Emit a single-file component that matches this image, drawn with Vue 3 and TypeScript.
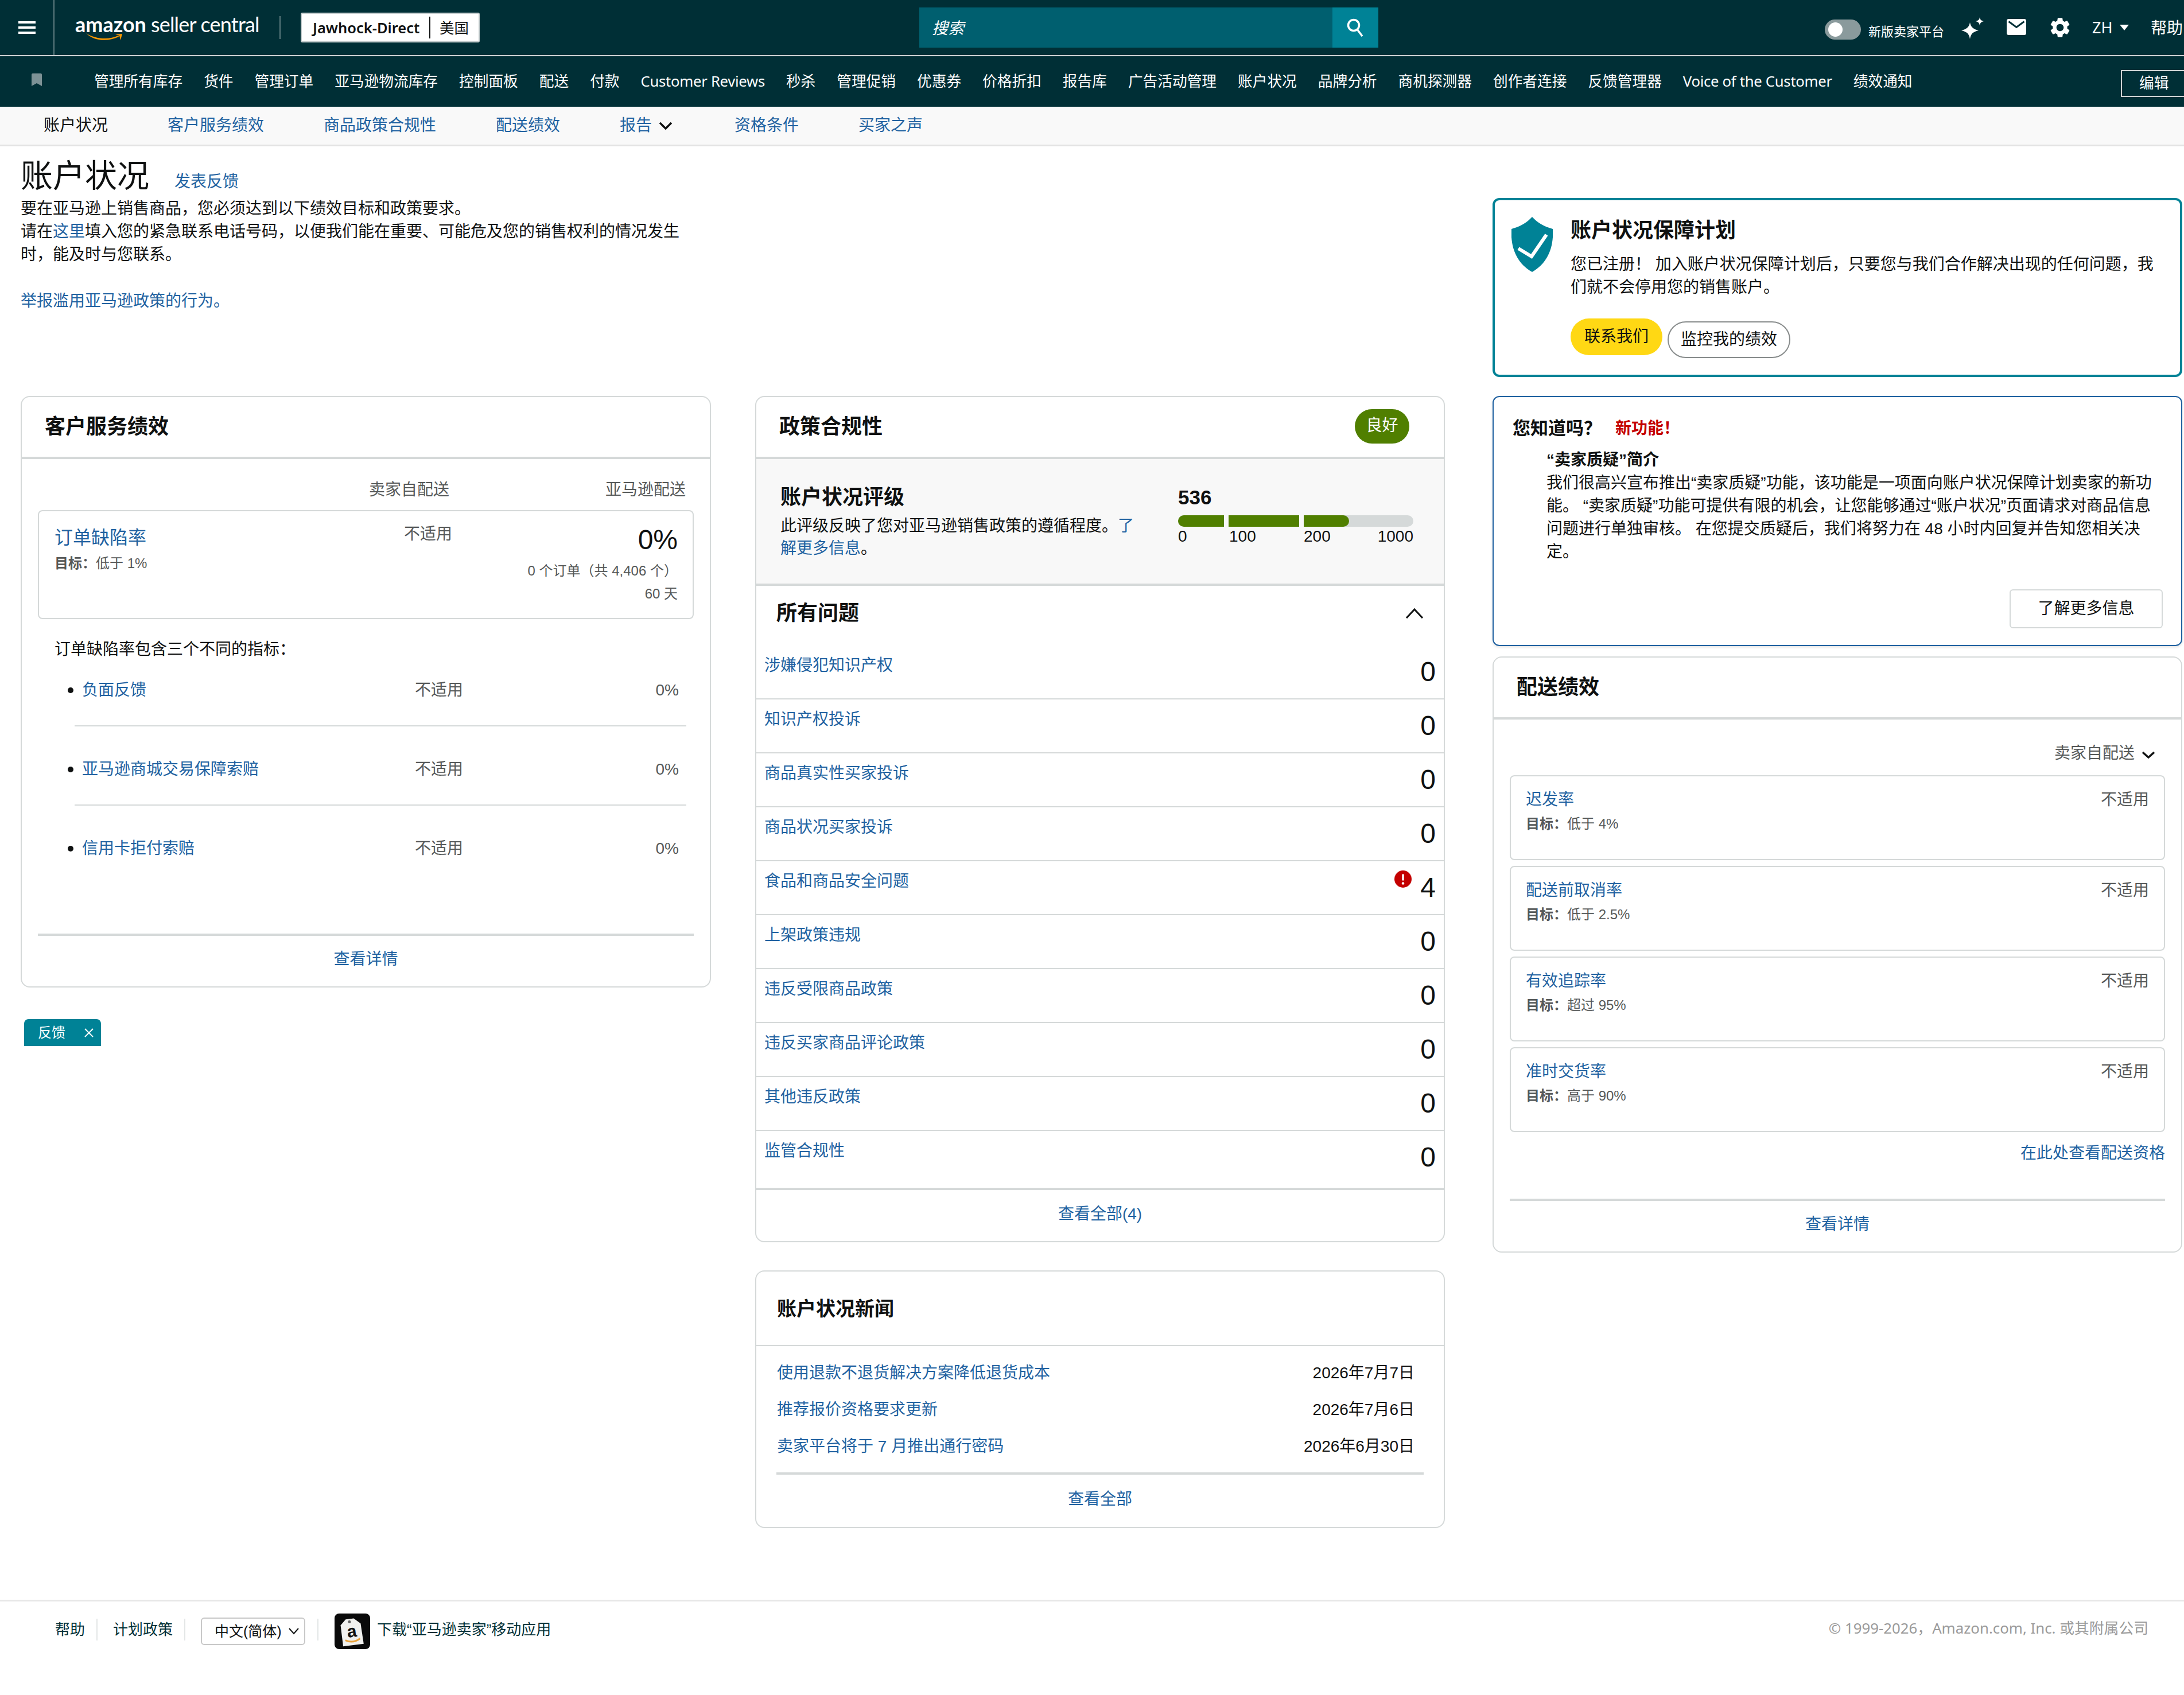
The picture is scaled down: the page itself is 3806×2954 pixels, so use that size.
<script setup lang="ts">
const navItems = [
  '管理所有库存', '货件', '管理订单', '亚马逊物流库存', '控制面板', '配送', '付款', 'Customer Reviews',
  '秒杀', '管理促销', '优惠券', '价格折扣', '报告库', '广告活动管理', '账户状况', '品牌分析', '商机探测器',
  '创作者连接', '反馈管理器', 'Voice of the Customer', '绩效通知',
]
const tabs = ['客户服务绩效', '商品政策合规性', '配送绩效']
const defects = ['负面反馈', '亚马逊商城交易保障索赔', '信用卡拒付索赔']
const issues = [
  { name: '涉嫌侵犯知识产权', count: 0 },
  { name: '知识产权投诉', count: 0 },
  { name: '商品真实性买家投诉', count: 0 },
  { name: '商品状况买家投诉', count: 0 },
  { name: '食品和商品安全问题', count: 4 },
  { name: '上架政策违规', count: 0 },
  { name: '违反受限商品政策', count: 0 },
  { name: '违反买家商品评论政策', count: 0 },
  { name: '其他违反政策', count: 0 },
  { name: '监管合规性', count: 0 },
]
const segments = [80, 123, 79]
const news = [
  { title: '使用退款不退货解决方案降低退货成本', date: '2026年7月7日' },
  { title: '推荐报价资格要求更新', date: '2026年7月6日' },
  { title: '卖家平台将于 7 月推出通行密码', date: '2026年6月30日' },
]
const shipping = [
  { name: '迟发率', goal: '低于 4%' },
  { name: '配送前取消率', goal: '低于 2.5%' },
  { name: '有效追踪率', goal: '超过 95%' },
  { name: '准时交货率', goal: '高于 90%' },
]
const isLatin = (s: string) => /[a-z]/i.test(s)
</script>

<template>
  <div class="app">
    <header class="topbar">
      <div class="menu">
        <svg width="30" height="22" viewBox="0 0 30 22"><path d="M0 2h30M0 11h30M0 20h30" stroke="#fff" stroke-width="4" /></svg>
      </div>
      <div class="logo">
        <span class="logo-a">amazon</span><span class="logo-b">seller central</span>
        <svg class="smile" width="64" height="14" viewBox="0 0 64 14"><path d="M0 0C14 9 38 13 56 4l1 2C38 15 14 14 0 0z" fill="#f90" /><path d="M51 2l12-1-3 11-2-8z" fill="#f90" /></svg>
      </div>
      <div class="logo-sep"></div>
      <div class="account"><span class="acc-name">Jawhock-Direct</span><span class="acc-region">美国</span></div>
      <div class="search">
        <div class="search-input">搜索</div>
        <div class="search-btn">
          <svg width="30" height="32" viewBox="0 0 30 32"><circle cx="12" cy="12" r="9.500" fill="none" stroke="#fff" stroke-width="3.500" /><path d="M18 19l9 12" stroke="#fff" stroke-width="3.500" /></svg>
        </div>
      </div>
      <div class="tools">
        <div class="toggle"><span class="knob"></span></div>
        <span class="toggle-label">新版卖家平台</span>
        <svg class="sparkle" width="40" height="39" viewBox="0 0 40 39"><path d="M15 10c1.500 8 5 11.500 15 14-10 2.500-13.500 6-15 15-1.500-9-5-12.500-15-15 10-2.500 13.500-6 15-14z" fill="#fff" /><path d="M32 1c.6 4 2.500 6 7 7-4.500 1-6.400 3-7 7.500-.6-4.500-2.500-6.500-7-7.500 4.500-1 6.400-3 7-7z" fill="#fff" /></svg>
        <svg class="mail" width="34" height="28" viewBox="0 0 34 28"><rect width="34" height="28" rx="3.500" fill="#fff" /><path d="M3.500 4.500L17 14.500 30.500 4.500" fill="none" stroke="#002f36" stroke-width="3" /></svg>
        <svg class="gear" width="42" height="42" viewBox="0 0 24 24"><path fill="#fff" d="M19.14 12.94c.04-.3.06-.61.06-.94 0-.32-.02-.64-.07-.94l2.03-1.58a.49.49 0 0 0 .12-.61l-1.92-3.32a.488.488 0 0 0-.59-.22l-2.39.96c-.5-.38-1.03-.7-1.62-.94l-.36-2.54a.484.484 0 0 0-.48-.41h-3.84c-.24 0-.43.17-.47.41l-.36 2.54c-.59.24-1.13.57-1.62.94l-2.39-.96c-.22-.08-.47 0-.59.22L2.74 8.87c-.12.21-.08.47.12.61l2.03 1.58c-.05.3-.09.63-.09.94s.02.64.07.94l-2.03 1.58a.49.49 0 0 0-.12.61l1.92 3.32c.12.22.37.29.59.22l2.39-.96c.5.38 1.03.7 1.62.94l.36 2.54c.05.24.24.41.48.41h3.84c.24 0 .44-.17.47-.41l.36-2.54c.59-.24 1.13-.56 1.62-.94l2.39.96c.22.08.47 0 .59-.22l1.92-3.32c.12-.22.07-.47-.12-.61l-2.01-1.58zM12 15.6c-1.98 0-3.6-1.62-3.6-3.6s1.62-3.6 3.6-3.6 3.6 1.62 3.6 3.6-1.62 3.6-3.6 3.6z" /></svg>
        <span class="lang">ZH</span>
        <span class="caret"></span>
        <span class="help">帮助</span>
      </div>
    </header>

    <nav class="navbar">
      <svg class="bookmark" width="18" height="22" viewBox="0 0 18 22"><path d="M0 2a2 2 0 0 1 2-2h14a2 2 0 0 1 2 2v20l-9-5-9 5z" fill="#7d9296" /></svg>
      <span v-for="item in navItems" :key="item" class="nav-item" :class="{ latin: isLatin(item) }">{{ item }}</span>
      <button class="edit">编辑</button>
    </nav>

    <div class="tabs">
      <span class="tab-current">账户状况</span>
      <a v-for="t in tabs" :key="t" class="link">{{ t }}</a>
      <a class="link report">报告
        <svg width="24" height="14" viewBox="0 0 24 14"><path d="M2 2l10 10L22 2" fill="none" stroke="#0f1111" stroke-width="3.500" /></svg>
      </a>
      <a class="link">资格条件</a>
      <a class="link">买家之声</a>
    </div>

    <main class="main">
      <section class="intro">
        <div class="title-row">
          <h1>账户状况</h1>
          <a class="link">发表反馈</a>
        </div>
        <p>要在亚马逊上销售商品，您必须达到以下绩效目标和政策要求。</p>
        <p>请在<a class="link">这里</a>填入您的紧急联系电话号码，以便我们能在重要、可能危及您的销售权利的情况发生时，能及时与您联系。</p>
        <p class="report-link"><a class="link">举报滥用亚马逊政策的行为。</a></p>
      </section>

      <section class="protect">
        <svg class="shield" width="72" height="96" viewBox="0 0 72 96">
          <path d="M36 0c9 10 21 17 36 21 2 32-9 60-36 75C9 81-2 53 0 21 15 17 27 10 36 0z" fill="#008296" />
          <path d="M12 55l23 14 26-38" fill="none" stroke="#fff" stroke-width="6" />
        </svg>
        <div class="protect-body">
          <h2>账户状况保障计划</h2>
          <p>您已注册！ 加入账户状况保障计划后，只要您与我们合作解决出现的任何问题，我们就不会停用您的销售账户。</p>
          <div class="protect-btns">
            <button class="btn-yellow">联系我们</button>
            <button class="btn-outline">监控我的绩效</button>
          </div>
        </div>
      </section>

      <div class="col col-left">
        <section class="card">
          <div class="card-head"><h2>客户服务绩效</h2></div>
          <div class="cs-body">
            <div class="cs-cols"><span>卖家自配送</span><span>亚马逊配送</span></div>
            <div class="odr">
              <div>
                <a class="link odr-name">订单缺陷率</a>
                <div class="goal"><b>目标：</b>低于 1%</div>
              </div>
              <div class="odr-na">不适用</div>
              <div class="odr-val">
                <div class="odr-pct">0%</div>
                <div class="odr-sub">0 个订单（共 4,406 个）</div>
                <div class="odr-sub">60 天</div>
              </div>
            </div>
            <p class="cs-note">订单缺陷率包含三个不同的指标：</p>
            <div class="defects">
              <div v-for="d in defects" :key="d" class="defect">
                <span class="bullet"></span>
                <a class="link defect-name">{{ d }}</a>
                <span class="muted defect-na">不适用</span>
                <span class="muted defect-val">0%</span>
              </div>
            </div>
            <div class="card-foot cs-foot"><a class="link">查看详情</a></div>
          </div>
        </section>
        <div class="feedback">
          <span>反馈</span>
          <svg width="18" height="18" viewBox="0 0 18 18"><path d="M2 2l14 14M16 2L2 16" stroke="#fff" stroke-width="2" /></svg>
        </div>
      </div>

      <div class="col col-mid">
        <section class="card">
          <div class="card-head head-badge">
            <h2>政策合规性</h2>
            <span class="badge">良好</span>
          </div>
          <div class="rating">
            <div class="rating-text">
              <h3>账户状况评级</h3>
              <p>此评级反映了您对亚马逊销售政策的遵循程度。<a class="link">了解更多信息</a>。</p>
            </div>
            <div class="rating-score">
              <div class="score">536</div>
              <div class="bar">
                <span v-for="(s, i) in segments" :key="i" class="seg" :style="{ width: s + 'px' }"></span>
              </div>
              <div class="ticks"><span class="t0">0</span><span class="t1">100</span><span class="t2">200</span><span>1000</span></div>
            </div>
          </div>
          <div class="issues-head">
            <h3>所有问题</h3>
            <svg width="32" height="20" viewBox="0 0 32 20"><path d="M2 18L16 3l14 15" fill="none" stroke="#0f1111" stroke-width="3" /></svg>
          </div>
          <div v-for="row in issues" :key="row.name" class="issue">
            <a class="link">{{ row.name }}</a>
            <svg v-if="row.count" class="alert" width="30" height="30" viewBox="0 0 30 30"><circle cx="15" cy="15" r="15" fill="#c40000" /><path d="M15 6.500v11" stroke="#fff" stroke-width="3.500" /><circle cx="15" cy="22.500" r="2.200" fill="#fff" /></svg>
            <span class="count">{{ row.count }}</span>
          </div>
          <div class="see-all"><a class="link">查看全部(4)</a></div>
        </section>

        <section class="card news">
          <h3 class="news-title">账户状况新闻</h3>
          <div class="news-list">
            <div v-for="n in news" :key="n.title" class="news-row">
              <a class="link">{{ n.title }}</a>
              <span>{{ n.date }}</span>
            </div>
          </div>
          <div class="card-foot news-foot"><a class="link">查看全部</a></div>
        </section>
      </div>

      <div class="col col-right">
        <section class="tip">
          <div class="tip-head"><strong>您知道吗？</strong><span class="tip-new">新功能！</span></div>
          <div class="tip-body">
            <b>“卖家质疑”简介</b>
            <p>我们很高兴宣布推出“卖家质疑”功能，该功能是一项面向账户状况保障计划卖家的新功能。 “卖家质疑”功能可提供有限的机会，让您能够通过“账户状况”页面请求对商品信息问题进行单独审核。 在您提交质疑后，我们将努力在 48 小时内回复并告知您相关决定。</p>
          </div>
          <div class="tip-actions"><button class="btn-square">了解更多信息</button></div>
        </section>

        <section class="card ship">
          <div class="card-head"><h2>配送绩效</h2></div>
          <div class="ship-body">
            <div class="ship-filter">
              <span>卖家自配送</span>
              <svg width="24" height="14" viewBox="0 0 24 14"><path d="M2 2l10 9 10-9" fill="none" stroke="#0f1111" stroke-width="3.500" /></svg>
            </div>
            <div class="ship-list">
              <div v-for="s in shipping" :key="s.name" class="ship-box">
                <div>
                  <a class="link">{{ s.name }}</a>
                  <div class="goal ship-goal"><b>目标：</b>{{ s.goal }}</div>
                </div>
                <span class="muted">不适用</span>
              </div>
            </div>
            <div class="ship-more"><a class="link">在此处查看配送资格</a></div>
            <div class="card-foot ship-foot"><a class="link">查看详情</a></div>
          </div>
        </section>
      </div>
    </main>

    <footer class="footer">
      <a>帮助</a>
      <span class="foot-sep"></span>
      <a>计划政策</a>
      <span class="foot-sep"></span>
      <div class="select">
        <span>中文(简体)</span>
        <svg width="18" height="12" viewBox="0 0 18 12"><path d="M1 1l8 9 8-9" fill="none" stroke="#0f1111" stroke-width="2" /></svg>
      </div>
      <span class="foot-sep"></span>
      <svg class="app-icon" width="62" height="62" viewBox="0 0 62 62">
        <rect width="62" height="62" rx="8" fill="#0a0a0a" />
        <g transform="rotate(-7 31 31)">
          <path d="M12 18l10-9h14l11 10 1 36H12z" fill="#f1f1ef" />
          <circle cx="28" cy="14" r="2.500" fill="#666" />
          <text x="30" y="41" text-anchor="middle" class="tag-a">a</text>
          <path d="M17 45c8 5 17 5 26 0" fill="none" stroke="#e9a23b" stroke-width="3" />
        </g>
      </svg>
      <a class="app-text">下载“亚马逊卖家”移动应用</a>
      <span class="copyright">© 1999-2026，Amazon.com, Inc. 或其附属公司</span>
    </footer>
  </div>
</template>

<style>
html, body { margin: 0; background: #fff; }
</style>

<style scoped>
.app {
  width: 3806px;
  height: 2954px;
  overflow: hidden;
  font: 28px/40px "Liberation Sans", "Noto Sans CJK SC", sans-serif;
  color: #0f1111;
  background: #fff;
}
h1, h2, h3, p { margin: 0; }
button { font: inherit; padding: 0; cursor: pointer; }
.link { color: #2162a1; text-decoration: none; }
.muted { color: #565959; white-space: nowrap; }

/* top bar */
.topbar {
  height: 96px;
  display: flex;
  align-items: center;
  background: #002f36;
  border-bottom: 2px solid #cdd3d4;
  color: #fff;
  font-family: "Noto Sans", "Noto Sans CJK SC", sans-serif;
}
.menu {
  width: 95px;
  height: 96px;
  padding-left: 32px;
  box-sizing: border-box;
  border-right: 2px solid #5c7a7e;
  display: flex;
  align-items: center;
}
.logo { margin-left: 36px; display: flex; align-items: baseline; gap: 8px; position: relative; margin-top: -12px; width: 320px; white-space: nowrap; }
.logo-a { font: 700 36px/44px Lato, sans-serif; }
.logo-b { font: 400 36px/44px Lato, sans-serif; letter-spacing: -0.8px; }
.smile { position: absolute; left: 19px; top: 38px; }
.logo-sep { width: 2px; height: 40px; background: #5c7a7e; margin-left: 36px; }
.account {
  margin-left: 35px;
  width: 312px;
  height: 52px;
  box-sizing: border-box;
  background: #fff;
  border: 2px solid #c5cdce;
  border-bottom-width: 3px;
  border-radius: 3px;
  display: flex;
  align-items: center;
  color: #0f1111;
  padding-left: 19px;
  font-size: 25.500px;
}
.acc-name { font-weight: 600; width: 203px; border-right: 2px solid #0f1111; line-height: 38px; white-space: nowrap; }
.acc-region { margin-left: 16px; }
.search { margin-left: 766px; width: 800px; height: 70px; display: flex; }
.search-input {
  flex: 1;
  background: #005f6f;
  color: #fff;
  padding-left: 22px;
  line-height: 70px;
  font-style: italic;
}
.search-btn { width: 80px; background: #008296; display: flex; align-items: center; justify-content: center; }
.tools { margin-left: auto; display: flex; align-items: center; height: 96px; }
.toggle { width: 63px; height: 35px; border-radius: 18px; background: #8a9a9c; margin-top: 6px; padding: 5px 0 0 6px; box-sizing: border-box; }
.knob { display: block; width: 25px; height: 25px; border-radius: 50%; background: #fff; }
.toggle-label { margin-left: 13px; font-size: 22px; margin-top: 12px; width: 133px; }
.sparkle { margin-left: 29px; }
.mail { margin-left: 39px; margin-top: -2px; }
.gear { margin-left: 38px; margin-top: -1px; }
.lang { margin-left: 35px; font-size: 27px; width: 36px; }
.caret { margin-left: 12px; border: 8px solid transparent; border-top: 10px solid #fff; border-bottom: 0; }
.help { margin-left: 38px; margin-right: 2px; }

/* nav */
.navbar {
  height: 88px;
  display: flex;
  align-items: center;
  gap: 37px;
  background: #002f36;
  color: #fff;
  padding-left: 55px;
  font-family: "Noto Sans", "Noto Sans CJK SC", sans-serif;
  font-size: 25.700px;
  white-space: nowrap;
}
.latin { letter-spacing: -0.3px; }
.bookmark { margin-right: 54px; margin-top: -6px; }
.edit {
  margin-left: auto;
  flex-shrink: 0;
  width: 130px;
  height: 47px;
  margin-right: -20px;
  margin-top: 6px;
  background: transparent;
  border: 2px solid #cdd3d4;
  color: #fff;
  text-align: left;
  padding-left: 30px;
  font-size: 25.700px;
}

/* tabs */
.tabs {
  height: 69px;
  box-sizing: border-box;
  display: flex;
  align-items: center;
  gap: 104px;
  padding-left: 76px;
  background: #f9f9f9;
  border-bottom: 3px solid #e3e3e3;
}
.report { display: flex; align-items: center; gap: 12px; margin-right: 4px; }

/* main grid */
.main {
  display: grid;
  grid-template-columns: 1280px 1285px 1202px;
  grid-template-rows: 435px auto;
  padding-left: 36px;
}
.intro { grid-column: 1 / 3; padding-top: 16px; width: 1170px; }
.title-row { display: flex; align-items: baseline; gap: 44px; margin-bottom: 1px; }
h1 { font-size: 56px; font-weight: 400; line-height: 72px; white-space: nowrap; }
.report-link { margin-top: 41px; }

.protect {
  box-sizing: border-box;
  margin-top: 90px;
  height: 312px;
  border: 4px solid #008296;
  border-radius: 12px;
  padding: 29px 20px 0 29px;
  display: flex;
  gap: 31px;
}
.shield { flex-shrink: 0; }
.protect-body h2 { font-size: 36px; line-height: 44px; font-weight: 700; margin-top: 2px; }
.protect-body p { margin-top: 17px; }
.protect-btns { margin-top: 34px; display: flex; align-items: flex-start; gap: 9px; }
.btn-yellow { width: 160px; height: 64px; border: 0; border-radius: 32px; background: #ffd814; color: #0f1111; }
.btn-outline { width: 214px; height: 64px; margin-top: 5px; background: #fff; color: #0f1111; border: 2px solid #888c8c; border-radius: 32px; }

.col-left, .col-mid { display: flex; flex-direction: column; align-items: flex-start; }
.card { box-sizing: border-box; width: 1202px; border: 2px solid #d5d9d9; border-radius: 16px; background: #fff; }
.col-left .card { width: 1203px; }
.card-head {
  box-sizing: content-box;
  height: 104px;
  padding-left: 40px;
  border-bottom: 4px solid #d5d9d9;
  display: flex;
  align-items: center;
}
.card-head h2 { font-size: 36px; font-weight: 700; line-height: 44px; }
.card-foot { border-top: 4px solid #d5d9d9; text-align: center; }

/* customer service */
.cs-body { padding: 34px 28px 27px; }
.cs-cols {
  display: grid;
  grid-template-columns: 717px 412px;
  text-align: right;
  color: #565959;
}
.odr {
  box-sizing: border-box;
  margin-top: 15px;
  height: 190px;
  border: 2px solid #d5d9d9;
  border-radius: 8px;
  padding: 24px 26px 0 27px;
  display: grid;
  grid-template-columns: 609px 84px 1fr;
}
.odr-name { font-size: 32px; line-height: 44px; display: block; }
.goal { font-size: 24px; line-height: 34px; color: #565959; margin-top: 6px; }
.odr-na { color: #565959; margin-top: -4px; white-space: nowrap; }
.odr-val { text-align: right; margin-top: -2px; }
.odr-pct { font-size: 48px; line-height: 56px; margin-bottom: 6px; }
.odr-sub { font-size: 24px; color: #565959; }
.cs-note { margin-top: 33px; padding-left: 29px; }
.defects { margin: 31px 13px 0 64px; }
.defect {
  display: flex;
  align-items: center;
  padding: 0 13px 41px 0;
  border-bottom: 2px solid #d5d9d9;
  margin-bottom: 55px;
}
.defect:last-child { padding-bottom: 0; border-bottom: 0; margin-bottom: 0; }
.bullet { width: 10px; height: 10px; border-radius: 50%; background: #0f1111; margin: 0 15px 0 -12px; flex-shrink: 0; }
.defect-name { width: 580px; }
.defect-val { margin-left: auto; }
.cs-foot { margin-top: 128px; padding-top: 21px; }
.feedback {
  box-sizing: border-box;
  margin: 55px 0 0 6px;
  width: 134px;
  height: 47px;
  background: #008296;
  color: #fff;
  border-radius: 8px 8px 0 0;
  display: flex;
  align-items: center;
  justify-content: space-between;
  padding: 0 12px 0 24px;
  font-size: 24px;
}

/* policy */
.head-badge { justify-content: space-between; padding-right: 60px; }
.badge {
  width: 95px;
  height: 60px;
  border-radius: 30px;
  background: #507f00;
  color: #fff;
  text-align: center;
  line-height: 58px;
  margin-top: -2px;
}
.rating {
  box-sizing: border-box;
  height: 221px;
  background: #f8f8f8;
  border-bottom: 4px solid #d5d9d9;
  padding: 45px 53px 0 42px;
  display: grid;
  grid-template-columns: 622px 410px;
  column-gap: 71px;
}
.rating h3 { font-size: 36px; line-height: 44px; }
.rating-text p { margin-top: 8px; line-height: 39px; }
.score { font-size: 35px; font-weight: 700; line-height: 44px; }
.bar { margin-top: 9px; height: 20px; border-radius: 10px; overflow: hidden; background: #d5d9d9; display: flex; }
.seg { box-sizing: content-box; height: 20px; background: #507f00; border-right: 8px solid #f8f8f8; }
.seg:last-child { border-right: 0; border-radius: 0 10px 10px 0; }
.ticks { display: flex; line-height: 34px; }
.t0 { width: 89px; }
.t1 { width: 130px; }
.t2 { flex: 1; }
.issues-head {
  height: 104px;
  box-sizing: border-box;
  padding: 26px 35px 0 35px;
  display: flex;
  justify-content: space-between;
  align-items: flex-start;
}
.issues-head h3 { font-size: 36px; line-height: 44px; }
.issues-head svg { margin-top: 12px; }
.issue {
  box-sizing: border-box;
  height: 94px;
  padding: 15px 14px 0;
  border-bottom: 2px solid #d5d9d9;
  display: flex;
  align-items: flex-start;
}
.issue:nth-last-child(2) { height: 103px; border-bottom: 4px solid #d5d9d9; }
.issue .alert { margin: 1px 15px 0 auto; }
.count { font-size: 48px; line-height: 56px; margin-top: 3px; margin-left: auto; }
.alert + .count { margin-left: 0; }
.see-all { text-align: center; padding: 22px 0 27px; }

/* news */
.news { margin-top: 49px; }
.news-title { font-size: 34px; line-height: 44px; padding: 43px 0 41px 36px; border-bottom: 2px solid #d5d9d9; }
.news-list { padding: 27px 51px 0 36px; }
.news-row { display: flex; justify-content: space-between; margin-bottom: 24px; }
.news-row:last-child { margin-bottom: 0; }
.news-foot { margin: 25px 35px 0; padding: 23px 0 28px; }

/* tip card */
.tip {
  box-sizing: border-box;
  height: 436px;
  border: 2px solid #2162a1;
  border-radius: 12px;
  padding: 33px 30px 0 33px;
  box-shadow: 0 2px 4px rgba(0, 0, 0, 0.12);
}
.tip-head { display: flex; align-items: center; line-height: 44px; }
.tip-head strong { font-size: 31px; width: 179px; }
.tip-new { color: #c40000; font-weight: 700; }
.tip-body { margin: 13px 0 0 59px; }
.tip-actions { display: flex; justify-content: flex-end; margin: 45px 2px 0 0; }
.btn-square { width: 267px; height: 68px; background: #fff; border: 2px solid #d5d9d9; border-radius: 6px; color: #0f1111; }

/* shipping */
.ship { margin-top: 18px; }
.ship-body { padding: 39px 28px 27px; }
.ship-filter { display: flex; justify-content: flex-end; align-items: center; gap: 12px; color: #565959; padding-right: 17px; }
.ship-filter svg { margin-top: 6px; }
.ship-list { margin-top: 18px; display: flex; flex-direction: column; gap: 10px; }
.ship-box {
  box-sizing: border-box;
  height: 148px;
  border: 2px solid #d5d9d9;
  border-radius: 8px;
  padding: 21px 26px 0 26px;
  display: flex;
  justify-content: space-between;
  align-items: flex-start;
}
.ship-goal { margin-top: 5px; }
.ship-more { margin-top: 17px; text-align: right; }
.ship-foot { margin-top: 59px; padding-top: 21px; }

/* footer */
.footer {
  box-sizing: border-box;
  margin-top: 125px;
  height: 167px;
  border-top: 3px solid #e7e7e7;
  display: flex;
  align-items: flex-start;
  padding: 0 62px 0 96px;
  color: #002f36;
  font-size: 26px;
}
.footer > * { margin-top: 29px; }
.foot-sep { width: 2px; height: 38px; background: #e3e6e6; margin: 30px 27px 0 20px; }
.select {
  box-sizing: border-box;
  width: 182px;
  height: 48px;
  margin-top: 28px;
  border: 2px solid #c8c8c8;
  border-radius: 6px;
  color: #0f1111;
  display: flex;
  align-items: center;
  justify-content: space-between;
  padding: 0 9px 0 22px;
  font-size: 25px;
}
.select + .foot-sep { margin-left: 21px; margin-right: 28px; }
.app-icon { margin-top: 21px; flex-shrink: 0; }
.tag-a { font: 700 30px "Liberation Sans", sans-serif; fill: #111; }
.app-text { margin-left: 12px; }
.footer > .copyright { margin: 26px 0 0 auto; color: #9a9a9a; font-family: "Noto Sans", "Noto Sans CJK SC", sans-serif; font-size: 25.800px; }
</style>
